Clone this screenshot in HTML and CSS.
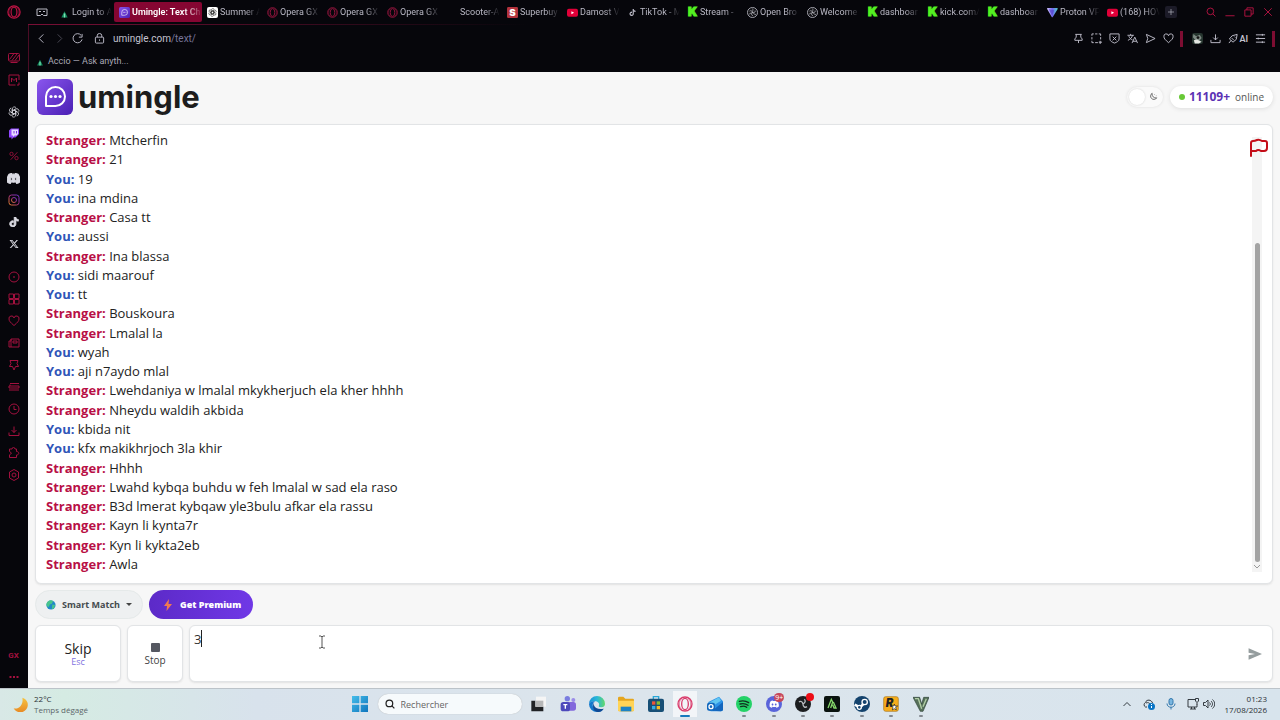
FILE: index.html
```html
<!DOCTYPE html>
<html lang="en">
  <head>
    <meta charset="UTF-8" />
    <title>Umingle: Text Chat</title>
    <link rel="stylesheet" href="styles.css">
  </head>
  <body>
    <svg class="defs" aria-hidden="true">
      <defs>
        <linearGradient id="purple" x1="0" y1="0" x2="1" y2="1"><stop offset="0" stop-color="#8a56ee" /><stop offset="1" stop-color="#4a1fb4" /></linearGradient>
        <linearGradient id="insta" x1="0" y1="1" x2="1" y2="0"><stop offset="0" stop-color="#e8862a" /><stop offset=".5" stop-color="#a8307e" /><stop offset="1" stop-color="#6a35d0" /></linearGradient>
        <linearGradient id="edge" x1="0" y1="0" x2="1" y2="0"><stop offset="0" stop-color="#1b8fd8" /><stop offset=".5" stop-color="#2ab8d8" /><stop offset="1" stop-color="#62d96a" /></linearGradient>
        <linearGradient id="win" x1="0" y1="0" x2="1" y2="1"><stop offset="0" stop-color="#45bdea" /><stop offset="1" stop-color="#0f75bd" /></linearGradient>
        <linearGradient id="moon" x1="0" y1="0" x2="0" y2="1"><stop offset="0" stop-color="#f6c440" /><stop offset="1" stop-color="#e88a24" /></linearGradient>
        <linearGradient id="proton" x1="0" y1="0" x2="1" y2="0"><stop offset="0" stop-color="#d6c8ff" /><stop offset=".5" stop-color="#7466ef" /><stop offset="1" stop-color="#4fd0c8" /></linearGradient>
      </defs>
      <symbol id="opera" viewBox="0 0 24 24"><circle cx="12" cy="12" r="10.5" fill="none" stroke="currentColor" stroke-width="2" /><ellipse cx="12" cy="12" rx="5" ry="8.5" fill="none" stroke="currentColor" stroke-width="2" /><path d="M8 3a11 11 0 0 0 0 18M16 3a11 11 0 0 1 0 18" fill="none" stroke="currentColor" stroke-width="1" /></symbol>
      <symbol id="accio" viewBox="0 0 24 24"><path d="M12 9 19 23H5z" fill="#12885c" /><path d="M12 14v9" stroke="#7fe0b4" stroke-width="3" /></symbol>
      <symbol id="bubble" viewBox="0 0 36 36"><rect width="36" height="36" rx="6" fill="url(#purple)" /><path d="M9 27V17.500a9.500 9.500 0 1 1 9.500 9.500Z" fill="none" stroke="#fff" stroke-width="2" stroke-linejoin="round" /><g fill="#fff"><circle cx="14" cy="17.500" r="1.600" /><circle cx="18.500" cy="17.500" r="1.600" /><circle cx="23" cy="17.500" r="1.600" /></g></symbol>
      <symbol id="knot" viewBox="0 0 24 24"><g fill="none" stroke="currentColor" stroke-width="1.500"><path id="k" d="M8.500 14V6a4.300 4.300 0 0 1 7.600-2.700M8.500 10l6.800-4" /><use href="#k" transform="rotate(60 12 12)" /><use href="#k" transform="rotate(120 12 12)" /><use href="#k" transform="rotate(180 12 12)" /><use href="#k" transform="rotate(240 12 12)" /><use href="#k" transform="rotate(300 12 12)" /></g></symbol>
      <symbol id="youtube" viewBox="0 0 24 24"><rect y="4" width="24" height="17" rx="4" fill="#e00038" /><path d="m9.500 9 6 3.500-6 3.500z" fill="#fff" /></symbol>
      <symbol id="tiktok" viewBox="0 0 24 24"><path fill="currentColor" d="M12.525.02c1.310-.02 2.610-.01 3.910-.02.08 1.530.63 3.090 1.750 4.170 1.120 1.110 2.700 1.620 4.240 1.790v4.030c-1.440-.05-2.890-.35-4.200-.97-.57-.26-1.100-.59-1.620-.93-.01 2.920.01 5.840-.02 8.750-.08 1.400-.54 2.790-1.350 3.940-1.310 1.920-3.580 3.170-5.910 3.210-1.430.08-2.860-.31-4.080-1.030-2.020-1.190-3.440-3.370-3.650-5.710-.02-.5-.03-1-.01-1.490.18-1.900 1.120-3.720 2.580-4.960 1.660-1.440 3.980-2.130 6.150-1.720v4.440c-.99-.32-2.150-.23-3.020.37-.63.41-1.110 1.040-1.360 1.750-.21.51-.15 1.070-.14 1.610.24 1.640 1.820 3.020 3.500 2.870 1.120-.01 2.190-.66 2.770-1.610.19-.33.4-.67.41-1.060.1-1.790.06-3.570.07-5.360z" /></symbol>
      <symbol id="obs" viewBox="0 0 24 24"><circle cx="12" cy="12" r="11" fill="#111115" stroke="currentColor" stroke-width="1.800" /><g fill="none" stroke="#b8b8c0" stroke-width="1.600"><path id="o" d="M12 12c-1-4-4-5-6.500-3M12 12c0-4 2-6 0-8.500" /><use href="#o" transform="rotate(120 12 12)" /><use href="#o" transform="rotate(240 12 12)" /></g></symbol>
      <symbol id="proton-vpn" viewBox="0 0 24 24"><path d="M2 2h19c2 0 3 1 2 3L13 21c-1 2-2 2-3 0L0 4c0-1 1-2 2-2z" fill="url(#proton)" /><path d="m4 5 12 2-5 12z" fill="#4a3cc4" opacity=".6" /></symbol>
      <symbol id="discord" viewBox="0 0 24 24"><path fill="currentColor" fill-rule="evenodd" d="M20.317 4.370a19.800 19.800 0 0 0-4.885-1.515c-.25.4-.52.9-.687 1.286a18.300 18.300 0 0 0-5.487 0c-.2-.46-.45-.9-.696-1.286A19.700 19.700 0 0 0 3.677 4.370C.533 9.046-.319 13.580.099 18.058a20 20 0 0 0 6.077 3.058c.5-.68.93-1.360 1.268-2.100a13 13 0 0 1-1.914-.91l.45-.43c3.928 1.793 8.180 1.793 12.061 0l.46.43a12.300 12.300 0 0 1-1.914.92c.37.74.8 1.430 1.268 2.090a19.900 19.900 0 0 0 6.064-3.058c.5-5.177-.838-9.674-3.502-13.688zM8.020 15.331c-1.183 0-2.157-1.086-2.157-2.419s.956-2.419 2.157-2.419c1.211 0 2.176 1.095 2.157 2.419 0 1.333-.956 2.419-2.157 2.419zm7.975 0c-1.183 0-2.157-1.086-2.157-2.419s.955-2.419 2.157-2.419c1.211 0 2.176 1.095 2.157 2.419 0 1.333-.946 2.419-2.157 2.419z" /></symbol>
      <symbol id="heart" viewBox="0 0 24 24"><path d="M12 21C5 15 2 12 2 8a5 5 0 0 1 10-2 5 5 0 0 1 10 2c0 4-3 7-10 13z" /></symbol>
      <symbol id="pin" viewBox="0 0 24 24"><path d="M5 3h14M7 3v6l-3 4v3h16v-3l-3-4V3M12 16v6" /></symbol>
      <symbol id="download" viewBox="0 0 24 24"><path d="M12 3v12m-5-5 5 5 5-5M2 15v6h20v-6" /></symbol>
      <symbol id="search" viewBox="0 0 24 24"><circle cx="10.500" cy="10.500" r="8" /><path d="m16.500 16.500 6 6" /></symbol>
    </svg>

    <div class="browser">
      <nav class="sidebar" aria-label="Opera sidebar">
        <button class="opera-menu" aria-label="Opera menu"><svg><use href="#opera" /></svg></button>
        <div class="side-group">
          <button aria-label="GX Corner"><svg viewBox="0 0 24 24"><rect x="1" y="3" width="22" height="15" rx="2" /><path d="m3 15 9-12M8 17 18 4M14 17l8-11M5 21h14" /></svg></button>
          <button aria-label="Mods"><svg viewBox="0 0 24 24"><path d="M15 22H2V2h20v10M18 22h4v-5M7 16V8l5 5 5-5v8" /></svg></button>
        </div>
        <div class="side-group">
          <button class="white" aria-label="ChatGPT"><svg><use href="#knot" /></svg></button>
          <button aria-label="Twitch"><svg viewBox="0 0 24 24"><path d="M6 1 2 5v14h5v4l4-4h4l7-7V1z" fill="#9147ff" stroke="none" /><path d="M7 3h13v9l-3 3h-4l-3 3v-3H7z" fill="#e8dcff" stroke="none" /><path d="M12 6v5M17 6v5" stroke="#7a34e0" /></svg></button>
          <button aria-label="Deals"><svg class="inset" viewBox="0 0 24 24"><circle cx="6" cy="7" r="4" /><circle cx="18" cy="17" r="4" /><path d="M20 3 4 21" /></svg></button>
          <button class="white" aria-label="Discord"><svg class="wide"><use href="#discord" /></svg></button>
          <button aria-label="Instagram"><svg class="insta" viewBox="0 0 24 24"><rect x="2" y="2" width="20" height="20" rx="5" /><circle cx="12" cy="12" r="5" /><path d="M17 6h1" /></svg></button>
          <button class="white" aria-label="TikTok"><svg class="inset"><use href="#tiktok" /></svg></button>
          <button class="white" aria-label="X"><svg class="inset" viewBox="0 0 24 24"><path fill="currentColor" stroke="none" d="M18.244 2.250h3.308l-7.227 8.260 8.502 11.240H16.170l-5.214-6.817L4.990 21.750H1.680l7.730-8.835L1.254 2.250H8.080l4.713 6.231zm-1.161 17.520h1.833L7.084 4.126H5.117z" /></svg></button>
        </div>
        <div class="side-group side-tools">
          <button aria-label="Player"><svg viewBox="0 0 24 24"><circle cx="12" cy="12" r="10" /><circle cx="12" cy="12" r="1" /></svg></button>
          <button aria-label="Speed Dial"><svg viewBox="0 0 24 24"><path d="M2 2h9v9H2zM13 2h9v9h-9zM2 13h9v9H2zM13 13h9v9h-9z" /></svg></button>
          <button aria-label="Favourites"><svg><use href="#heart" /></svg></button>
          <button aria-label="News"><svg viewBox="0 0 24 24"><path d="M6 4h16v16H2V8h4zM6 4v16M10 8h8v4h-8z" /></svg></button>
          <button aria-label="Pinboards"><svg viewBox="0 0 24 24"><path d="M4 3h16l-2 6 3 6h-6l-3 7-3-7H3l3-6z" /></svg></button>
          <button aria-label="Tabs"><svg viewBox="0 0 24 24"><path d="M4 5h18M2 10h20v4H2zM2 18h20M4 7v3" /></svg></button>
          <button aria-label="History"><svg viewBox="0 0 24 24"><circle cx="12" cy="12" r="10" /><path d="M12 6v7h5" /></svg></button>
          <button aria-label="Downloads"><svg><use href="#download" /></svg></button>
          <button aria-label="Extensions"><svg viewBox="0 0 24 24"><path d="M3 4h5a3 3 0 0 1 6 0h3v5c6 0 6 7 0 7v5H3v-5l4-4-4-3z" /></svg></button>
          <button aria-label="Settings"><svg viewBox="0 0 24 24"><path d="m12 1 9 5v12l-9 5-9-5V6z" /><circle cx="12" cy="12" r="4" /></svg></button>
        </div>
        <div class="side-group side-bottom">
          <button class="gx">GX</button>
          <button aria-label="More"><svg viewBox="0 0 24 24"><path d="M3 12h4M10 12h4M17 12h4" stroke-width="4" /></svg></button>
        </div>
      </nav>

      <div class="window">
        <div class="tabs">
          <button class="tab-list" aria-label="Tab list"><svg viewBox="0 0 24 24"><path d="M2 6h20v13h-7l-3-3-3 3H2zM6 11h4M14 11h4" /></svg></button>
          <button class="tab"><svg><use href="#accio" /></svg><span>Login to A</span></button>
          <button class="tab active"><svg><use href="#bubble" /></svg><span>Umingle: Text Ch</span></button>
          <button class="tab"><svg class="chip"><use href="#knot" /></svg><span>Summer A</span></button>
          <button class="tab"><svg class="red"><use href="#opera" /></svg><span>Opera GX</span></button>
          <button class="tab"><svg class="red"><use href="#opera" /></svg><span>Opera GX</span></button>
          <button class="tab"><svg class="red"><use href="#opera" /></svg><span>Opera GX</span></button>
          <button class="tab"><svg></svg><span>Scooter-A</span></button>
          <button class="tab"><svg viewBox="0 0 24 24"><rect width="24" height="24" rx="3" fill="#b3323c" /><text x="5" y="20" class="s-letter">S</text></svg><span>Superbuy</span></button>
          <button class="tab"><svg><use href="#youtube" /></svg><span>Damost V</span></button>
          <button class="tab"><svg class="small"><use href="#tiktok" /></svg><span>TikTok - M</span></button>
          <button class="tab"><b class="kick">K</b><span>Stream - </span></button>
          <button class="tab"><svg><use href="#obs" /></svg><span>Open Bro</span></button>
          <button class="tab"><svg><use href="#obs" /></svg><span>Welcome</span></button>
          <button class="tab"><b class="kick">K</b><span>dashboar</span></button>
          <button class="tab"><b class="kick">K</b><span>kick.com/</span></button>
          <button class="tab"><b class="kick">K</b><span>dashboar</span></button>
          <button class="tab"><svg><use href="#proton-vpn" /></svg><span>Proton VP</span></button>
          <button class="tab"><svg><use href="#youtube" /></svg><span>(168) HOV</span></button>
          <button class="new-tab" aria-label="New tab"><svg viewBox="0 0 24 24"><path d="M12 3v18M3 12h18" /></svg></button>
          <div class="controls">
            <button aria-label="Search tabs"><svg><use href="#search" /></svg></button>
            <button aria-label="Minimize"><svg viewBox="0 0 24 24"><path d="M1 21h22" /></svg></button>
            <button aria-label="Restore"><svg viewBox="0 0 24 24"><path d="M2 7h15v15H2zM7 7V2h15v15h-5" /></svg></button>
            <button aria-label="Close"><svg viewBox="0 0 24 24"><path d="m3 3 18 18M21 3 3 21" /></svg></button>
          </div>
        </div>

        <div class="pane">
          <div class="address">
            <button aria-label="Back"><svg viewBox="0 0 24 24"><path d="M16 3 7 12l9 9" /></svg></button>
            <button class="dim" aria-label="Forward"><svg viewBox="0 0 24 24"><path d="m8 3 9 9-9 9" /></svg></button>
            <button aria-label="Reload"><svg viewBox="0 0 24 24"><path d="M20 5A10 10 0 1 0 22 14M22 2v7h-7" /></svg></button>
            <button class="lock" aria-label="Site information"><svg viewBox="0 0 24 24"><rect x="3" y="9" width="18" height="13" rx="2" /><path d="M7 9V6a5 5 0 0 1 10 0v3M12 14v3" /></svg></button>
            <a class="url" href="#">umingle.com<span>/text/</span></a>
            <div class="tools">
              <button aria-label="Pin"><svg><use href="#pin" /></svg></button>
              <button aria-label="Snapshot"><svg viewBox="0 0 24 24"><path d="M2 6V2h4M9 2h5M17 2h4v4M21 9v5M2 9v5M2 17v4h4M9 21h6M20 17v7M17 20h7" /></svg></button>
              <button aria-label="Ad blocker"><svg viewBox="0 0 24 24"><path d="M2 2h20v11c0 5-5 7-10 9-5-2-10-4-10-9zM8 8l8 8M16 8l-8 8" /></svg></button>
              <button aria-label="Translate"><svg viewBox="0 0 24 24"><path d="M1 5h14M8 2v3M12 5c-1 5-5 9-10 11M4 7c2 5 5 7 8 8M11 22l6-13 6 13M13 18h8" /></svg></button>
              <button aria-label="Send to Flow"><svg viewBox="0 0 24 24"><path d="m3 3 19 9-19 9 3-9z" /></svg></button>
              <button aria-label="Bookmark"><svg><use href="#heart" /></svg></button>
              <i class="bar"></i>
              <button aria-label="Profile"><svg class="avatar" viewBox="0 0 24 24"><rect width="24" height="24" rx="5" fill="#26352f" /><path d="M3 2 9 7l8-3 4 7-5 6-9-2-5-6z" fill="#7b8781" /><path d="m4 16 7-2 10 5-6 4H6z" fill="#e3e5e1" /><circle cx="13" cy="10" r="3" fill="#111" /></svg></button>
              <button aria-label="Downloads"><svg><use href="#download" /></svg></button>
              <button class="ai"><svg viewBox="0 0 24 24"><path d="m3 13 6-7 11-3-2 11-7 6zM7 16l-5 6M14 8l2 2M8 11l5 5" /></svg>AI</button>
              <button aria-label="Easy setup"><svg viewBox="0 0 24 24"><path d="M2 4h20M2 12h20M2 20h20M16 2v4M7 10v4M16 18v4" /></svg></button>
              <i class="bar"></i>
            </div>
          </div>
          <div class="bookmarks"><a href="#"><svg><use href="#accio" /></svg>Accio — Ask anyth...</a></div>

          <main class="page">
            <header class="site-header">
              <a class="logo" href="#"><svg><use href="#bubble" /></svg>umingle</a>
              <button class="theme" aria-label="Dark mode"><i></i><svg viewBox="0 0 24 24"><path d="M10 3a8 8 0 1 0 11 11A9 9 0 0 1 10 3zM15 6h1M19 9h1" /></svg></button>
              <div class="online"><i></i><b>11109+</b>online</div>
            </header>

            <section class="chat">
              <div class="messages">
                <p><b class="stranger">Stranger:</b> Mtcherfin</p>
                <p><b class="stranger">Stranger:</b> 21</p>
                <p><b class="you">You:</b> 19</p>
                <p><b class="you">You:</b> ina mdina</p>
                <p><b class="stranger">Stranger:</b> Casa tt</p>
                <p><b class="you">You:</b> aussi</p>
                <p><b class="stranger">Stranger:</b> Ina blassa</p>
                <p><b class="you">You:</b> sidi maarouf</p>
                <p><b class="you">You:</b> tt</p>
                <p><b class="stranger">Stranger:</b> Bouskoura</p>
                <p><b class="stranger">Stranger:</b> Lmalal la</p>
                <p><b class="you">You:</b> wyah</p>
                <p><b class="you">You:</b> aji n7aydo mlal</p>
                <p><b class="stranger">Stranger:</b> Lwehdaniya w lmalal mkykherjuch ela kher hhhh</p>
                <p><b class="stranger">Stranger:</b> Nheydu waldih akbida</p>
                <p><b class="you">You:</b> kbida nit</p>
                <p><b class="you">You:</b> kfx makikhrjoch 3la khir</p>
                <p><b class="stranger">Stranger:</b> Hhhh</p>
                <p><b class="stranger">Stranger:</b> Lwahd kybqa buhdu w feh lmalal w sad ela raso</p>
                <p><b class="stranger">Stranger:</b> B3d lmerat kybqaw yle3bulu afkar ela rassu</p>
                <p><b class="stranger">Stranger:</b> Kayn li kynta7r</p>
                <p><b class="stranger">Stranger:</b> Kyn li kykta2eb</p>
                <p><b class="stranger">Stranger:</b> Awla</p>
              </div>
              <div class="scrollbar">
                <div class="track"><div class="thumb"></div></div>
                <svg viewBox="0 0 10 10"><path d="m2 3 3 3 3-3" /></svg>
              </div>
              <button class="report" aria-label="Report"><svg viewBox="0 0 20 20"><path d="M2 18V5q0-2 2-2 2 0 4-1 2-1 5 1h3q2 0 2 2v5q0 3-3 3h-3q-3-2-5 0H2" /></svg></button>
            </section>

            <div class="options">
              <button class="match"><svg viewBox="0 0 24 24"><circle cx="12" cy="12" r="11" fill="#2088c9" /><path d="M4 4c4-4 10-4 13-1l-3 6-5 2-2 6-5-2c-2-4-1-8 2-11zM15 11l7 1-3 8-5 2z" fill="#48c58c" /></svg>Smart Match<span class="arrow"></span></button>
              <button class="premium"><svg viewBox="0 0 24 24"><path d="M14 0 4 14h6l-1 10 11-14h-7z" fill="#f07a50" /></svg>Get Premium</button>
            </div>

            <div class="composer">
              <button class="skip">Skip<small>Esc</small></button>
              <button class="stop"><i></i>Stop</button>
              <div class="entry">
                <textarea aria-label="Message">3</textarea>
                <i class="caret"></i>
                <svg class="pointer" viewBox="0 0 8 14"><path d="M1 1h2l1 1 1-1h2M4 2v10M1 13h2l1-1 1 1h2" /></svg>
                <button aria-label="Send"><svg viewBox="0 0 24 20"><path d="m1 0 23 10L1 20v-8l11-2L1 8z" fill="#959d9e" /></svg></button>
              </div>
            </div>
          </main>
        </div>
      </div>
    </div>

    <footer class="taskbar">
      <div class="weather">
        <svg viewBox="0 0 24 24"><path d="M15 1a12 12 0 1 1-14 17C9 20 17 13 15 1z" fill="url(#moon)" /></svg>
        <p>22°C<span>Temps dégagé</span></p>
      </div>
      <div class="dock">
        <button class="start" aria-label="Start"><svg viewBox="0 0 24 24"><path d="M0 0h11v11H0zM13 0h11v11H13zM0 13h11v11H0zM13 13h11v11H13z" fill="url(#win)" /></svg></button>
        <label class="search"><svg><use href="#search" /></svg><input type="text" placeholder="Rechercher" aria-label="Rechercher" /></label>
        <div class="apps">
          <button aria-label="Task view"><svg viewBox="0 0 24 24"><path d="M9 1h15v15H9z" fill="#f5f5f5" /><path d="M2 7h6v9h12v7H2z" fill="#202225" /><path d="M8 7h12v9H8z" fill="#b6b7b8" /></svg></button>
          <button aria-label="Teams"><svg viewBox="0 0 24 24"><circle cx="11" cy="4" r="4" fill="#7a7de0" /><circle cx="20" cy="6" r="3" fill="#9a8ce8" /><rect x="9" y="9" width="15" height="13" rx="4" fill="#8268dc" /><rect x="1" y="9" width="14" height="14" rx="4" fill="#4d49bb" /><path d="M5 13h6M8 13v6" stroke="#fff" stroke-width="2" /></svg></button>
          <button aria-label="Edge"><svg viewBox="0 0 24 24"><path d="M0 12a12 12 0 0 1 24 0c0 3-2 5-6 5-3 0-4-1-3-3 1-3-2-6-6-6-5 0-8 2-9 4z" fill="url(#edge)" /><path d="M0 12c1-3 5-5 9-4-3 2-4 5-3 8 1 5 8 7 16 3-3 4-6 5-10 5A12 12 0 0 1 0 12z" fill="#1478cc" /><path d="M9 8c-3 3-2 8 2 10 3 2 7 2 11 1-4 7-15 7-16-2 0-4 1-7 3-9z" fill="#114a94" /></svg></button>
          <button aria-label="Files"><svg viewBox="0 0 24 24"><path d="M0 3q0-2 2-2h6l3 3h11q2 0 2 2v15q0 2-2 2H2q-2 0-2-2z" fill="#e5a61f" /><path d="M0 7h24v14q0 2-2 2H2q-2 0-2-2z" fill="#ffd457" /><path d="M4 16h16v7H4z" fill="#1c83c6" /></svg></button>
          <button aria-label="Store"><svg viewBox="0 0 24 24"><path d="M8 5V1h8v4" fill="none" stroke="#28a7d8" stroke-width="2" /><rect y="4" width="24" height="20" rx="3" fill="#174f76" /><path d="M6 8h5v5H6z" fill="#ef5436" /><path d="M13 8h5v5h-5z" fill="#84bd34" /><path d="M6 15h5v5H6z" fill="#33aee5" /><path d="M13 15h5v5h-5z" fill="#f5ba24" /></svg></button>
          <button class="current" aria-label="Opera GX"><svg class="pink"><use href="#opera" /></svg></button>
          <button aria-label="Outlook"><svg viewBox="0 0 24 24"><path d="M2 9 18 1l6 7v12q0 3-3 3H6q-3 0-3-3z" fill="#2c91e6" /><path d="m3 10 15-8 3 5-14 9z" fill="#61c6f1" /><path d="m8 22 16-13v11q0 3-3 3z" fill="#1466bd" /><rect y="10" width="12" height="12" rx="3" fill="#1267bd" /><circle cx="6" cy="16" r="3" fill="none" stroke="#fff" stroke-width="2" /></svg></button>
          <button class="open" aria-label="Spotify"><svg viewBox="0 0 24 24"><circle cx="12" cy="12" r="12" fill="#24d267" /><path d="M5 8q8-2 14 2M6 12q7-2 12 2M7 16q5-2 9 1" fill="none" stroke="#123020" stroke-width="2" stroke-linecap="round" /></svg></button>
          <button class="open" aria-label="Discord"><svg viewBox="0 0 24 24"><circle cx="12" cy="12" r="12" fill="#5964da" /><g color="#fff" transform="translate(5 5) scale(.6)"><use href="#discord" width="24" height="24" /></g></svg><em>9+</em></button>
          <button class="open" aria-label="OBS"><svg viewBox="0 0 24 24"><circle cx="12" cy="12" r="12" fill="#1c1e20" /><path d="M12 12c-1-4-4-5-6-3M12 12c4-2 4-5 2-7M12 12c0 4 3 6 6 4" fill="none" stroke="#b9bcc0" stroke-width="2" /></svg><em class="rec"></em></button>
          <button class="open" aria-label="Armoury"><svg viewBox="0 0 24 24"><rect width="24" height="24" rx="3" fill="#0a130f" /><path d="m6 18 5-13 2 4-3 9M14 9l4 9h-3l-2-5" fill="none" stroke="#86d96c" stroke-width="2" /></svg></button>
          <button class="open" aria-label="Steam"><svg viewBox="0 0 24 24"><circle cx="12" cy="12" r="12" fill="#14436d" /><path d="m1 13 8 4 6-6" fill="none" stroke="#fff" stroke-width="4" /><circle cx="16" cy="9" r="4" fill="#14436d" stroke="#fff" stroke-width="2" /><circle cx="8" cy="17" r="3" fill="#14436d" stroke="#fff" stroke-width="2" /></svg></button>
          <button class="open" aria-label="Rockstar Games"><svg viewBox="0 0 24 24"><rect x="1" y="1" width="22" height="22" rx="3" fill="#f7ad1d" stroke="#a77519" /><text x="4" y="16" class="r-letter">R</text><path d="m17 12 1 3h4l-3 2 1 4-3-2-3 2 1-4-2-2h3z" fill="#fff" stroke="#222" /></svg></button>
          <button class="open" aria-label="GTA V"><svg viewBox="0 0 24 24"><path d="M0 2h10l3 10 3-10h8l-9 21h-4z" fill="#56705a" stroke="#2c4135" /><path d="M3 4h5l5 15M20 4l-5 12" fill="none" stroke="#b1cda5" stroke-width="2" /></svg></button>
        </div>
      </div>
      <div class="tray">
        <svg viewBox="0 0 24 24"><path d="m5 16 7-7 7 7" /></svg>
        <svg viewBox="0 0 24 24"><path d="M8 18H5a5 5 0 0 1 0-9c2-7 12-6 14 1M6 10c4-2 7 0 9 3" /><circle cx="17" cy="17" r="7" fill="#0874c5" stroke="none" /><path d="M17 16v4M17 12v2" stroke="#fff" /></svg>
        <svg class="mic" viewBox="0 0 24 24"><rect x="8" y="1" width="8" height="13" rx="4" fill="#78b5df" /><path d="M4 11c0 10 16 10 16 0M12 18v5" /></svg>
        <div class="net">
          <svg viewBox="0 0 24 24"><path d="M16 3H2v15h18v-6M6 22h12M9 18v4M15 18v4M17 1h6v5l-3 3-3-3zM20 9v4" /></svg>
          <svg viewBox="0 0 24 24"><path d="M1 9h4l5-5v16l-5-5H1zM13 9c2 2 2 4 0 6M16 6c4 4 4 8 0 12M19 3c6 6 6 12 0 18" /></svg>
        </div>
        <p>01:23<span>17/08/2026</span></p>
      </div>
    </footer>
  </body>
</html>
```

FILE: styles.css
```css
* {
  box-sizing: border-box;
}
body {
  margin: 0;
  height: 100vh;
  display: flex;
  flex-direction: column;
  background-color: #06060b;
  font-family: "Open Sans", "Noto Sans", sans-serif;
  overflow: hidden;
}
button {
  padding: 0;
  border: none;
  background: none;
  color: inherit;
  font-family: inherit;
  cursor: pointer;
}
a {
  color: inherit;
  text-decoration: none;
}
p {
  margin: 0;
}
svg {
  display: block;
  flex: none;
  width: 12px;
  height: 12px;
}
.defs {
  position: absolute;
  width: 0;
  height: 0;
}
.s-letter {
  font: 900 21px Inter, sans-serif;
  fill: #fff;
}
.r-letter {
  font: italic 900 17px Inter, sans-serif;
  fill: #222;
}

/* browser frame */
.browser {
  flex: 1;
  min-height: 0;
  display: flex;
  font-family: Roboto, sans-serif;
}
.sidebar {
  width: 28px;
  display: flex;
  flex-direction: column;
  color: #a3113f;
}
.sidebar button {
  display: flex;
  align-items: center;
  justify-content: center;
  width: 27px;
  height: 22px;
}
.sidebar svg,
.controls svg,
.address svg,
.tab-list svg,
.new-tab svg {
  fill: none;
  stroke: currentColor;
  stroke-width: 2;
}
.sidebar .opera-menu {
  height: 24px;
  margin-bottom: 13px;
  color: #c01445;
}
.opera-menu svg {
  width: 14px;
  height: 14px;
}
.side-group {
  padding-top: 10px;
}
.side-tools {
  padding-top: 11px;
}
.side-bottom {
  margin-top: auto;
}
.sidebar .white {
  color: #dcdce4;
}
.sidebar .inset {
  width: 10px;
  height: 10px;
}
.sidebar .wide {
  width: 13px;
  height: 13px;
}
.sidebar .insta {
  stroke: url(#insta);
}
.gx {
  font-size: 8px;
  font-weight: 700;
}
.window {
  flex: 1;
  min-width: 0;
  display: flex;
  flex-direction: column;
}
.tabs {
  display: flex;
  align-items: center;
  height: 24px;
  color: #b9b8c4;
}
.tab-list {
  width: 26px;
  padding-left: 8px;
}
.tab {
  display: flex;
  align-items: center;
  gap: 2px;
  width: 60px;
  height: 20px;
  padding-left: 5px;
  font-size: 9px;
}
.tab span {
  flex: 1;
  white-space: nowrap;
  text-align: left;
  -webkit-mask-image: linear-gradient(90deg, #000 60%, transparent 95%);
  mask-image: linear-gradient(90deg, #000 60%, transparent 95%);
}
.tab svg {
  width: 11px;
  height: 11px;
}
.tab .small {
  padding: 2px;
}
.tab .chip {
  background-color: #fff;
  border-radius: 2px;
  padding: 1px;
  color: #222;
}
.kick {
  width: 11px;
  color: #53f022;
  font: 900 12px/12px Inter, sans-serif;
  -webkit-text-stroke: 1px #53f022;
}
.red {
  color: #96163e;
}
.tab.active {
  width: 88px;
  border-radius: 2px;
  background-color: #850632;
  color: #fff;
  font-weight: 600;
}
.active span {
  -webkit-mask-image: linear-gradient(90deg, #000 75%, transparent);
  mask-image: linear-gradient(90deg, #000 75%, transparent);
}
.new-tab {
  margin-left: 3px;
  padding: 2px;
  border-radius: 2px;
  background-color: #1c1b28;
}
.new-tab svg {
  width: 8px;
  height: 8px;
}
.controls {
  display: flex;
  gap: 9px;
  margin-left: auto;
  padding-right: 7px;
  color: #c81448;
}
.controls svg {
  width: 10px;
  height: 10px;
}
.pane {
  flex: 1;
  min-height: 0;
  display: flex;
  flex-direction: column;
  padding-top: 1px;
  background: linear-gradient(90deg, #7a0f36, transparent 40%) no-repeat top / 100% 1px;
}
.address,
.bookmarks {
  border-left: 1px solid #4b0c25;
}
.address {
  display: flex;
  align-items: center;
  height: 27px;
  padding-left: 3px;
  color: #c4c3d0;
}
.address > button {
  width: 18px;
  display: flex;
  justify-content: center;
}
.address > .lock {
  width: 26px;
}
.address svg {
  width: 11px;
  height: 11px;
}
.dim {
  color: #4d4c58;
}
.url {
  margin-left: 1px;
  font-size: 10px;
}
.url span {
  color: #77759a;
}
.tools {
  display: flex;
  align-items: center;
  gap: 7px;
  margin-left: auto;
  padding-right: 6px;
}
.tools .bar {
  width: 3px;
  height: 16px;
  margin: 0 -1px;
  background-color: #7d0d32;
}
.tools .bar + button {
  margin-left: 3px;
}
.tools .avatar {
  stroke: none;
}
.ai {
  display: flex;
  align-items: center;
  font-size: 9px;
  font-weight: 600;
}
.bookmarks {
  height: 20px;
  padding-left: 5px;
  color: #aaa9b6;
  font-size: 9px;
  line-height: 18px;
}
.bookmarks a {
  display: flex;
  align-items: center;
  gap: 2px;
}
.bookmarks svg {
  height: 10px;
}

/* chat page */
.page {
  flex: 1;
  min-height: 0;
  display: flex;
  flex-direction: column;
  gap: 6px;
  padding: 0 7px 6px 7px;
  background-color: #f7f7f7;
  color: #222;
  font-family: "Open Sans", "Noto Sans", sans-serif;
}
.site-header {
  display: flex;
  align-items: center;
  gap: 7px;
  height: 46px;
  padding-top: 3px;
}
.logo {
  display: flex;
  align-items: center;
  gap: 5px;
  margin-left: 2px;
  margin-right: auto;
  color: #1d1d1d;
  font: 700 31px/36px Inter, sans-serif;
}
.logo svg {
  width: 36px;
  height: 36px;
}
.theme {
  display: flex;
  align-items: center;
  justify-content: space-between;
  width: 36px;
  height: 20px;
  padding: 0 5px 0 2px;
  border-radius: 10px;
  background-color: #fafafa;
  box-shadow: 0 0 3px #ddd;
}
.theme i {
  width: 16px;
  height: 16px;
  border-radius: 50%;
  background-color: #fff;
  box-shadow: 0 0 2px #ccc;
}
.theme svg {
  width: 10px;
  height: 10px;
  fill: none;
  stroke: #555;
  stroke-width: 2;
}
.online {
  display: flex;
  align-items: center;
  gap: 4px;
  height: 22px;
  padding: 0 9px;
  border-radius: 11px;
  background-color: #fff;
  box-shadow: 0 1px 4px #ddd;
  color: #555;
  font-size: 10px;
}
.online i {
  width: 6px;
  height: 6px;
  border-radius: 50%;
  background-color: #68c936;
}
.online b {
  margin-right: 1px;
  color: #5b32b4;
  font-size: 12px;
}
.chat,
.skip,
.stop,
.entry {
  border: 1px solid #e2e4e6;
  border-radius: 6px;
  background-color: #fff;
  box-shadow: 0 1px 2px #e2e2e2;
}
.chat {
  position: relative;
  flex: 1;
  min-height: 0;
  display: flex;
  padding: 6px 10px 9px;
}
.messages {
  flex: 1;
  display: flex;
  flex-direction: column;
  justify-content: space-between;
  font-size: 13px;
  line-height: 19px;
}
.stranger {
  color: #b80f46;
}
.you {
  color: #2f55b8;
}
.scrollbar {
  display: flex;
  flex-direction: column;
  width: 10px;
  margin: 6px 0 2px;
  background-color: #f4f4f4;
}
.track {
  flex: 1;
  display: flex;
  align-items: flex-end;
  justify-content: center;
}
.thumb {
  width: 5px;
  height: 75%;
  border-radius: 3px;
  background-color: #a3a3a3;
}
.scrollbar svg {
  width: 10px;
  height: 10px;
  fill: none;
  stroke: #999;
}
.report {
  position: absolute;
  top: 13px;
  right: 3px;
}
.report svg {
  width: 20px;
  height: 20px;
  fill: none;
  stroke: #c40d18;
  stroke-width: 2;
  stroke-linecap: round;
  stroke-linejoin: round;
}
.options {
  display: flex;
  gap: 6px;
}
.options button {
  display: flex;
  align-items: center;
  height: 29px;
  border-radius: 15px;
  font-size: 9px;
}
.match {
  gap: 6px;
  width: 108px;
  padding-left: 10px;
  border: 1px solid #e5e9e9;
  background-color: #eef0f1;
  color: #444b4e;
  font-weight: 700;
}
.match svg {
  width: 10px;
  height: 10px;
}
.arrow {
  border: 3px solid transparent;
  border-top-color: #444;
  border-bottom: none;
}
.premium {
  gap: 6px;
  width: 104px;
  padding-left: 13px;
  background: linear-gradient(90deg, #5c2ac8, #7038e6);
  color: #fff;
  font-weight: 800;
}
.composer {
  display: flex;
  gap: 6px;
  height: 57px;
}
.skip,
.stop {
  display: flex;
  flex-direction: column;
  align-items: center;
  justify-content: center;
}
.skip {
  width: 86px;
  font-size: 14px;
  line-height: 16px;
}
.skip small {
  color: #8273e0;
  font-size: 9px;
  line-height: 10px;
}
.stop {
  gap: 2px;
  width: 56px;
  padding-top: 3px;
  color: #444;
  font-size: 10px;
  line-height: 13px;
}
.stop i {
  width: 9px;
  height: 9px;
  border-radius: 1px;
  background-color: #555861;
}
.entry {
  position: relative;
  flex: 1;
  display: flex;
  align-items: center;
  padding-right: 10px;
}
.entry textarea {
  flex: 1;
  align-self: stretch;
  padding: 4px;
  border: none;
  outline: none;
  resize: none;
  background: none;
  color: #333;
  font-family: inherit;
  font-size: 13px;
  line-height: 18px;
}
.entry button svg {
  width: 14px;
}
.caret {
  position: absolute;
  top: 4px;
  left: 11px;
  width: 1px;
  height: 17px;
  background-color: #222;
}
.pointer {
  position: absolute;
  top: 9px;
  left: 128px;
  width: 8px;
  height: 14px;
  fill: none;
  stroke: #555;
}

/* taskbar */
.taskbar {
  display: grid;
  grid-template-columns: 1fr auto 1fr;
  align-items: center;
  height: 32px;
  box-shadow: inset 0 1px #bcc3c9;
  background: linear-gradient(90deg, #d8e8e6, #d5ebe3 5%, #d8e2ec 20%, #dce5ec 50%, #d8e4ed);
  color: #2b3034;
  font-size: 8px;
  line-height: 11px;
}
.taskbar span {
  display: block;
}
.weather {
  display: flex;
  align-items: center;
  gap: 6px;
  padding-left: 13px;
}
.weather svg {
  width: 15px;
  height: 15px;
}
.weather span {
  color: #5c6669;
}
.dock {
  display: flex;
  align-items: center;
}
.start {
  width: 33px;
  padding-left: 7px;
}
.start svg {
  width: 16px;
  height: 16px;
}
.search {
  display: flex;
  align-items: center;
  gap: 6px;
  width: 144px;
  height: 20px;
  padding: 0 7px;
  border-radius: 10px;
  background-color: #f6fafc;
  box-shadow: 0 0 1px #aaa;
}
.search svg {
  width: 10px;
  height: 10px;
  fill: none;
  stroke: #222;
  stroke-width: 3;
}
.search input {
  min-width: 0;
  flex: 1;
  padding: 0;
  border: none;
  outline: none;
  background: none;
  font-family: inherit;
  font-size: 9px;
}
.search input::placeholder {
  color: #666;
}
.apps {
  display: grid;
  grid-template-columns: repeat(14, 1fr);
  width: 412px;
  margin-left: 2px;
}
.apps button {
  position: relative;
  display: flex;
  align-items: center;
  justify-content: center;
  height: 30px;
}
.apps svg {
  width: 16px;
  height: 16px;
}
.pink {
  color: #da3c6c;
}
.current {
  background: linear-gradient(#f2f5f8, #f2f5f8) no-repeat center / 24px 26px;
}
.open::after,
.current::after {
  content: "";
  position: absolute;
  bottom: 2px;
  width: 4px;
  height: 2px;
  border-radius: 1px;
  background-color: #838990;
}
.current::after {
  width: 10px;
  background-color: #1679bd;
}
.apps em {
  position: absolute;
  top: 4px;
  right: 4px;
  width: 10px;
  height: 9px;
  border-radius: 5px;
  background-color: #c7485a;
  color: #fff;
  font-size: 7px;
  font-style: normal;
  line-height: 9px;
}
.apps .rec {
  width: 8px;
  height: 8px;
  background-color: #ed0d16;
}
.tray {
  display: flex;
  align-items: center;
  justify-content: flex-end;
  gap: 10px;
  padding-right: 13px;
}
.tray svg {
  width: 12px;
  height: 12px;
  fill: none;
  stroke: #343b41;
  stroke-width: 2;
}
.tray .mic {
  stroke: #3478ad;
}
.net {
  display: flex;
  gap: 4px;
}
.tray p {
  text-align: right;
}
```
